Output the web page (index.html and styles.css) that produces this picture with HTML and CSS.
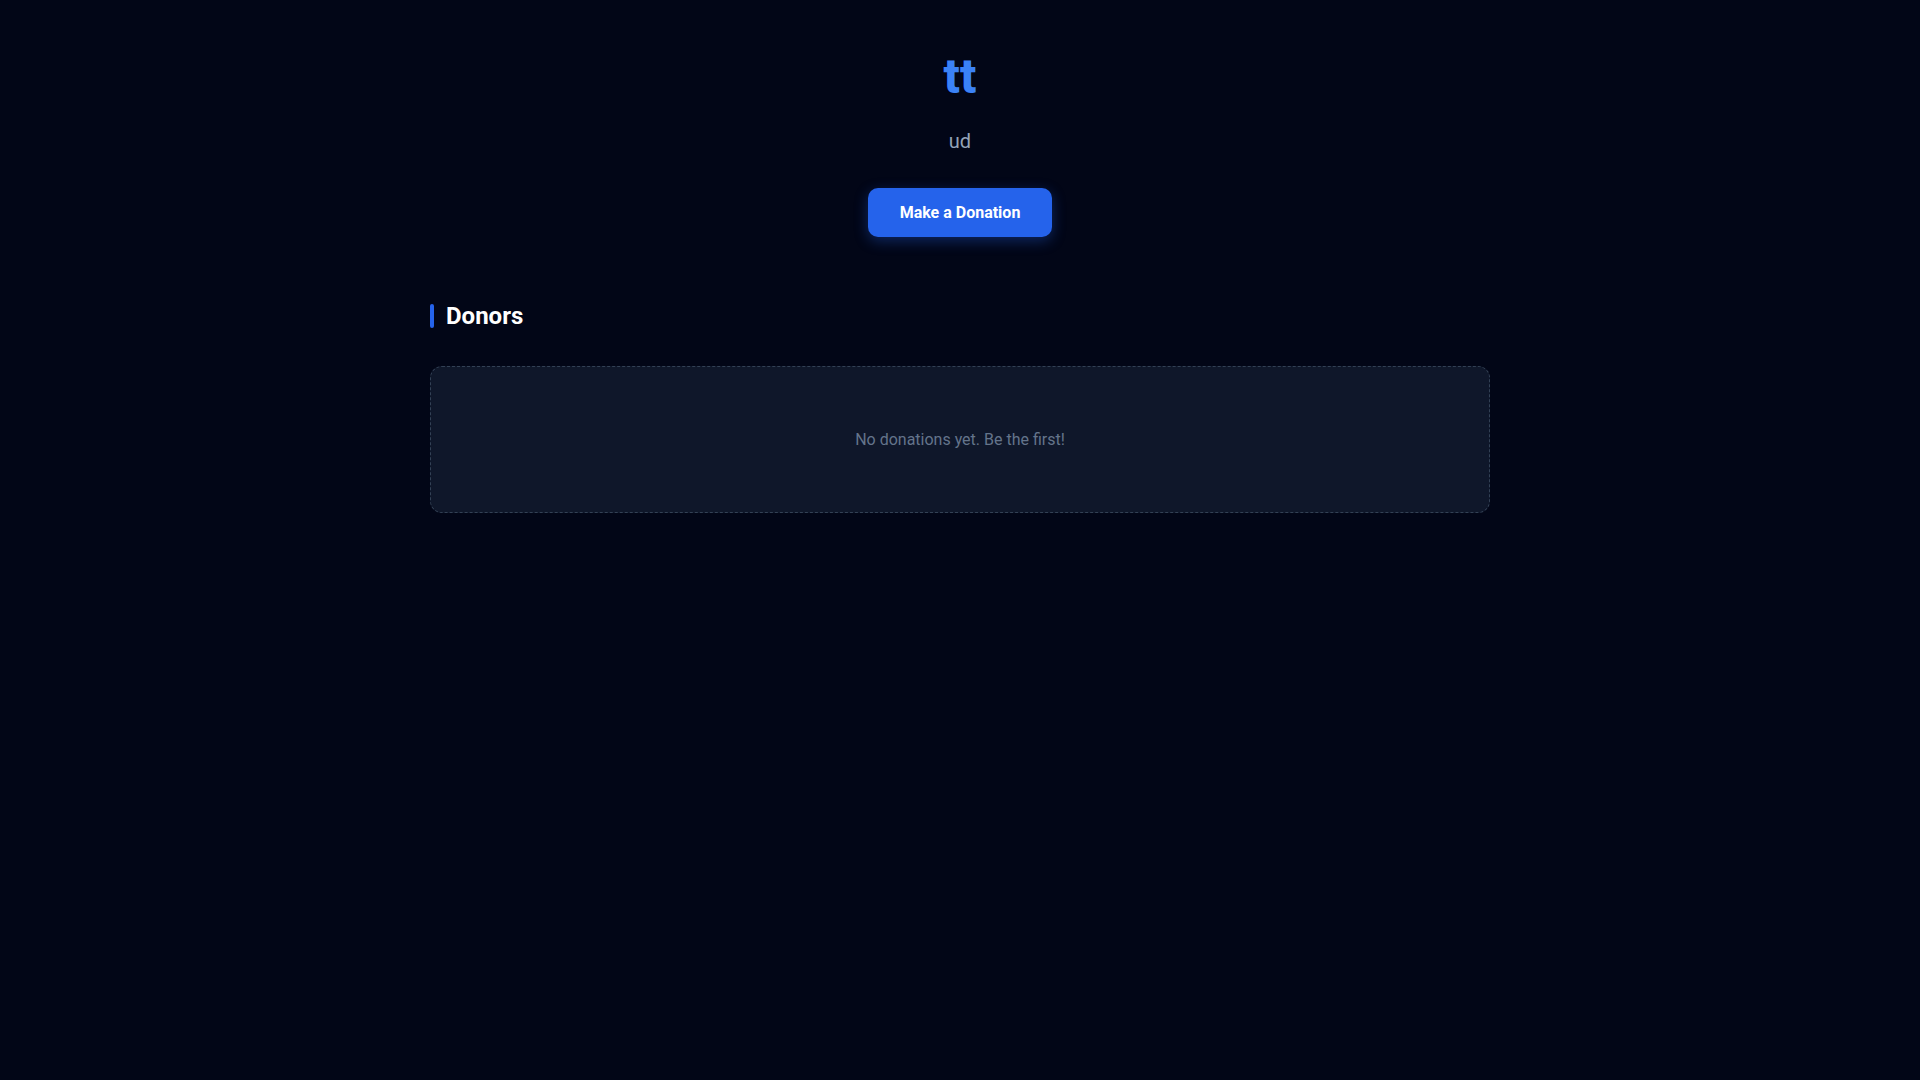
FILE: index.html
```html
<!DOCTYPE html>
<html lang="en">
<head>
    <meta charset="UTF-8">
    <meta name="viewport" content="width=device-width, initial-scale=1.0">
    <title>tt</title>
    <link rel="stylesheet" href="styles.css">
</head>
<body>

    <div class="container">
        <header class="header">
            <h1 class="title">tt</h1>
            <p class="subtitle">ud</p>
            <button class="donate-btn">Make a Donation</button>
        </header>

        <section class="donors">
            <h2 class="section-title"><span class="accent"></span>Donors</h2>
            <div class="empty-box">
                No donations yet. Be the first!
            </div>
        </section>
    </div>

</body>
</html>
```

FILE: styles.css
```css
body {
    margin: 0;
    font-family: Roboto, 'Liberation Sans', Arial, sans-serif;
    background: #020617;
    color: #f1f5f9;
    min-height: 100vh;
}

.container {
    max-width: 1060px;
    margin: 0 auto;
    padding: 0 20px;
}

.header {
    display: flex;
    flex-direction: column;
    align-items: center;
    padding-top: 49px;
}

.title {
    margin: 0;
    font-size: 48px;
    font-weight: 800;
    line-height: 56px;
    color: #3b82f6;
}

.subtitle {
    margin: 22px 0 0 0;
    font-size: 20px;
    line-height: 28px;
    color: #94a3b8;
}

.donate-btn {
    margin-top: 33px;
    padding: 14px 32px;
    border: none;
    border-radius: 10px;
    background-color: #2563eb;
    color: #ffffff;
    font-family: inherit;
    font-size: 16px;
    font-weight: 700;
    line-height: 21px;
    cursor: pointer;
    box-shadow: 0 4px 14px rgba(37, 99, 235, 0.35);
}

.donors {
    margin-top: 65px;
}

.section-title {
    display: flex;
    align-items: center;
    gap: 12px;
    margin: 0 0 36px 0;
    font-size: 24px;
    font-weight: 700;
    line-height: 28px;
    color: #ffffff;
}

.accent {
    width: 4px;
    height: 24px;
    border-radius: 2px;
    background: #2563eb;
}

.empty-box {
    padding: 60px 20px;
    border: 1px dashed #334155;
    border-radius: 12px;
    background: #0f172a;
    color: #64748b;
    font-size: 16px;
    line-height: 25px;
    text-align: center;
}
```
